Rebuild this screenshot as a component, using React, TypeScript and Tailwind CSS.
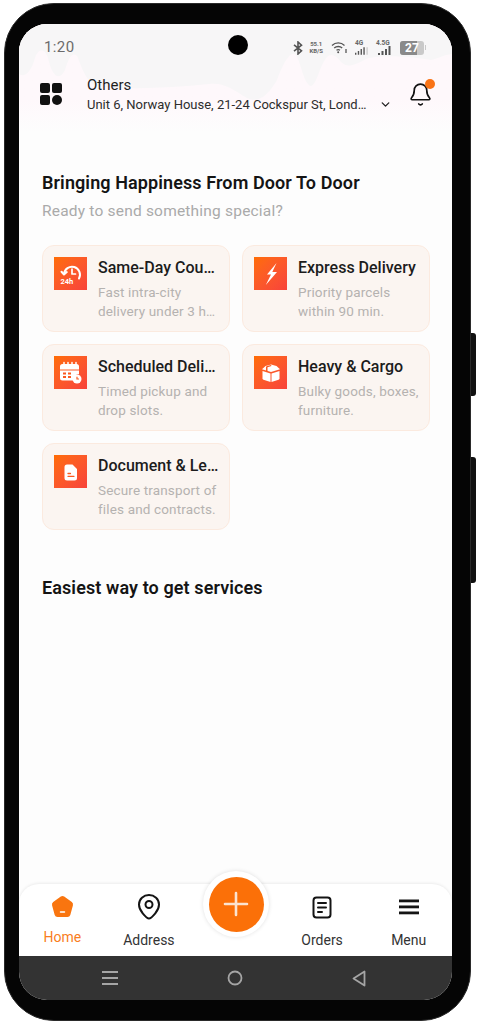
import { Bell, ChevronDown } from 'lucide-react'
import type { ReactNode } from 'react'

function SameDayIcon() {
  return (
    <svg width="24" height="24" viewBox="0 0 24 24" fill="none" stroke="white" strokeLinecap="round" strokeLinejoin="round">
      <path d="M5 12a8 8 0 1 1 15 4.500" strokeWidth="2" />
      <path d="M2.500 9.800l2.500 2.700 2.800-2.400" strokeWidth="2" />
      <path d="M13 7v5h3.500" strokeWidth="1.700" />
      <text x="1.500" y="22" fontSize="7.500" fontWeight="700" fill="white" stroke="none" fontFamily="Roboto, sans-serif">24h</text>
    </svg>
  )
}

function BoltIcon() {
  return (
    <svg width="24" height="24" viewBox="0 0 24 24" fill="white">
      <path d="M17.500 1 8 12.500h4L6.800 23 18 10h-4.700z" />
    </svg>
  )
}

function CalendarIcon() {
  return (
    <svg width="25" height="25" viewBox="0 0 25 25" fill="none">
      <path d="M2 6.500a2.500 2.500 0 0 1 2.500-2.500h14a2.500 2.500 0 0 1 2.500 2.500v3H2z" fill="white" />
      <path d="M2 10.500h19v3.500a6 6 0 0 0-5.500 6.500H4.500A2.500 2.500 0 0 1 2 18z" fill="white" />
      <path d="M6 2.500v3M10 2.500v3M14 2.500v3M18 2.500v3" stroke="white" strokeWidth="1.500" strokeLinecap="round" />
      <path d="M5 12.500h3v2H5zM10 12.500h3v2h-3zM5 16h3v2H5zM10 16h3v2h-3z" fill="#fb5a20" />
      <circle cx="19" cy="19" r="4.500" fill="white" />
      <path d="M19 16.800V19h2" stroke="#fb5a20" strokeWidth="1.200" fill="none" />
    </svg>
  )
}

function BoxIcon() {
  return (
    <svg width="24" height="24" viewBox="0 0 24 24" fill="white">
      <path d="M12 3.500 6.500 5 3 8.200 12 11l9-2.800L17.500 5z" />
      <path d="M3.500 10l8 2.400V21l-7-2.300a1.500 1.500 0 0 1-1-1.400z" />
      <path d="M20.500 10l-8 2.400V21l7-2.300a1.500 1.500 0 0 0 1-1.400z" />
      <path d="M8 5l4-1 .500 1-4 1.300V11l-1.500-.500V5.800z" fill="#fb5a20" />
    </svg>
  )
}

function DocIcon() {
  return (
    <svg width="24" height="24" viewBox="0 0 24 24" fill="none">
      <path d="M8 4.500h5.500l4.500 4.500v9a2.500 2.500 0 0 1-2.500 2.500h-7.500A2.500 2.500 0 0 1 5.500 18V7A2.500 2.500 0 0 1 8 4.500z" fill="white" />
      <path d="M9 13.500h2.500M9 16.300h6" stroke="#fb5a20" strokeWidth="1.300" strokeLinecap="round" />
    </svg>
  )
}

function ServiceCard({ icon, title, lines }: { icon: ReactNode; title: string; lines: string[] }) {
  return (
    <div className="flex h-[87px] min-w-0 gap-[11px] rounded-xl border border-[#fbeadf] bg-[#fbf5f1] pl-[11px] pr-[8px] pt-[11px]">
      <div className="flex h-[33px] w-[33px] shrink-0 items-center justify-center bg-linear-to-br from-[#ff6c00] to-[#f8423a]">
        {icon}
      </div>
      <div className="min-w-0 flex-1">
        <p className="truncate pr-[2px] text-[16px] leading-[22px] font-medium text-[#1c1c1c]">{title}</p>
        <div className="mt-[4px]">
          {lines.map((line) => (
            <p key={line} className="truncate pr-[2px] text-[13.5px] leading-[19px] tracking-[0.15px] text-[#b5b2b0]">
              {line}
            </p>
          ))}
        </div>
      </div>
    </div>
  )
}

function NavTab({ icon, label, active }: { icon: ReactNode; label: string; active?: boolean }) {
  return (
    <div className="flex flex-col items-center">
      <div className="flex h-[34px] items-center justify-center">{icon}</div>
      <span className={active ? 'mt-[4px] text-[14px] leading-[18px] text-[#f97d22]' : 'mt-[7px] text-[14px] leading-[18px] text-[#333333]'}>
        {label}
      </span>
    </div>
  )
}

export default function App() {
  return (
    <div className="relative h-[1024px] w-[477px] overflow-hidden bg-white font-['Roboto',sans-serif]">
      {/* side buttons */}
      <div className="absolute left-[468px] top-[333px] h-[63px] w-[8px] rounded-r-[3px] bg-[#111111]" />
      <div className="absolute left-[468px] top-[457px] h-[126px] w-[8px] rounded-r-[3px] bg-[#111111]" />

      <div className="absolute left-[4px] top-[3px] h-[1018px] w-[467px] rounded-[50px] border border-[#2a2a2a] bg-[#050505] pb-[20px] pl-[14px] pr-[18px] pt-[20px]">
        <div className="relative flex h-full flex-col overflow-hidden rounded-[28px] bg-[#fdfdfd]">
          {/* faint wave behind the header */}
          <div className="absolute left-0 top-0 h-[108px] w-full bg-linear-to-b from-[#fef8fb] from-70% to-[#fdfdfd]" />
          <svg className="absolute left-0 top-0" width="433" height="108" viewBox="0 0 433 108" fill="#f7f6f7">
            <path d="M0 0V50C6 54 12 48 16 34C19 24 26 24 29 34C33 52 40 58 46 46C50 32 54 28 58 32C62 40 66 58 78 62C110 66 150 64 190 60C205 58 215 66 228 74C240 80 250 70 258 56C264 40 270 28 276 30C282 36 284 60 292 62C298 60 300 44 306 36C310 28 316 30 322 38C330 46 340 38 350 34C370 30 400 34 412 36C420 34 428 30 433 30V0Z" />
          </svg>

          {/* status bar */}
          <div className="relative flex h-[46px] shrink-0 items-center pl-[25px] pr-[26px] pt-[1px] text-[#6b6b6b]">
            <span className="text-[15px] leading-none tracking-[0.4px]">1:20</span>
            <div className="absolute left-[209px] top-[11px] h-[20px] w-[20px] rounded-full bg-black" />
            <div className="ml-auto flex items-center gap-[6px]">
              <svg width="10" height="14" viewBox="0 0 10 14" fill="none" stroke="#555555" strokeWidth="1.600">
                <path d="M1 3.800l7.500 6L5 13V1l3.500 3.200L1 10.200" />
              </svg>
              <span className="text-center text-[6px] leading-[6.500px] font-bold text-[#666666]">
                55.1
                <br />
                KB/S
              </span>
              <svg className="ml-[2px]" width="16" height="13" viewBox="0 0 16 13" fill="none" stroke="#555555" strokeWidth="1.300">
                <path d="M1 4.500c3.500-3.500 9-3.500 12.500 0M3.200 7c2.300-2 5.800-2 8 0M5.500 9.300c1-.8 2.500-.8 3.500 0" />
                <circle cx="7.200" cy="11.300" r="1" fill="#555555" stroke="none" />
                <path d="M15 8v4" />
              </svg>
              <div className="relative ml-[2px] h-[14px] w-[13px]">
                <span className="absolute left-0 top-[-1px] text-[6.500px] font-bold leading-none text-[#666666]">4G</span>
                <svg className="absolute left-0 top-[5px]" width="13" height="9" viewBox="0 0 14 9" fill="#555555">
                  <path d="M0 7h1.500v2H0zM3 5h1.500v4H3zM6 3h1.500v6H6zM9 1h1.500v8H9z" />
                  <path d="M12.500 1h1v8h-1z" fill="#bbbbbb" />
                </svg>
              </div>
              <div className="relative ml-[2px] h-[14px] w-[16px]">
                <span className="absolute left-0 top-[-1px] text-[6.500px] font-bold leading-none text-[#666666]">4.5G</span>
                <svg className="absolute left-[2px] top-[5px]" width="14" height="9" viewBox="0 0 14 9" fill="#555555">
                  <path d="M0 7h2v2H0zM3.500 5h2v4h-2zM7 3h2v6H7zM10.500 0h2v9h-2z" />
                </svg>
              </div>
              <div className="ml-[2px] flex items-center gap-[1px]">
                <div className="relative flex h-[14px] w-[24px] items-center overflow-hidden rounded-[3px] bg-[#c9c9c9]">
                  <div className="h-full w-[17px] bg-[#8a8a8a]" />
                  <span className="absolute left-[5px] text-[12px] font-bold text-white">27</span>
                </div>
                <div className="h-[5px] w-[1px] bg-[#c9c9c9]" />
              </div>
            </div>
          </div>

          {/* header */}
          <div className="relative flex h-[48px] shrink-0 items-center pl-[21px] pr-[19px]">
            <div className="grid h-[22px] w-[22px] shrink-0 grid-cols-2 gap-[2px]">
              <div className="rounded-[2px] bg-[#111111]" />
              <div className="rounded-[2px] bg-[#111111]" />
              <div className="rounded-[2px] bg-[#111111]" />
              <div className="rounded-full bg-[#111111]" />
            </div>
            <div className="ml-[25px] w-[283px] min-w-0">
              <p className="text-[15px] leading-[20px] text-[#1f1f1f]">Others</p>
              <p className="mt-[1px] truncate text-[13px] leading-[18px] text-[#2d2d2d]">
                Unit 6, Norway House, 21-24 Cockspur St, London SW1Y 5BN
              </p>
            </div>
            <ChevronDown className="ml-[9px] mt-[21px] shrink-0 text-[#222222]" size={13} strokeWidth={2.500} />
            <div className="relative ml-auto">
              <Bell size={25} strokeWidth={1.600} className="text-[#111111]" />
              <div className="absolute right-[-2px] top-[-3px] h-[10px] w-[10px] rounded-full bg-[#f97316]" />
            </div>
          </div>

          {/* content */}
          <div className="relative flex-1 pl-[23px] pr-[22px] pt-[53px]">
            <h1 className="text-[18px] leading-[24px] font-semibold tracking-[0.1px] text-[#141414]">Bringing Happiness From Door To Door</h1>
            <p className="mt-[6px] text-[15.500px] leading-[20px] tracking-[0.2px] text-[#aaaaaa]">Ready to send something special?</p>

            <div className="mt-[24px] grid grid-cols-2 gap-x-[12px] gap-y-[12px]">
              <ServiceCard icon={<SameDayIcon />} title="Same-Day Courier" lines={['Fast intra-city', 'delivery under 3 hours.']} />
              <ServiceCard icon={<BoltIcon />} title="Express Delivery" lines={['Priority parcels', 'within 90 min.']} />
              <ServiceCard icon={<CalendarIcon />} title="Scheduled Delivery" lines={['Timed pickup and', 'drop slots.']} />
              <ServiceCard icon={<BoxIcon />} title="Heavy & Cargo" lines={['Bulky goods, boxes,', 'furniture.']} />
              <ServiceCard icon={<DocIcon />} title="Document & Legal" lines={['Secure transport of', 'files and contracts.']} />
            </div>

            <h2 className="mt-[46px] text-[18px] leading-[24px] font-semibold tracking-[0.1px] text-[#141414]">Easiest way to get services</h2>
          </div>

          {/* bottom nav */}
          <div className="relative grid h-[72px] shrink-0 grid-cols-5 rounded-t-[20px] bg-white pt-[6px] shadow-[0_-1px_3px_rgba(0,0,0,0.07)]">
            <NavTab
              active
              label="Home"
              icon={
                <svg width="25" height="25" viewBox="0 0 25 25">
                  <path d="M10.800 1.600a3 3 0 0 1 3.400 0l7.600 5.500a3 3 0 0 1 1.100 3.300l-2.600 9.500a3 3 0 0 1-2.900 2.100H7.600a3 3 0 0 1-2.900-2.100L2.100 10.400a3 3 0 0 1 1.100-3.300z" fill="#f9750f" />
                  <path d="M10.500 17h4" stroke="white" strokeWidth="1.500" strokeLinecap="round" />
                </svg>
              }
            />
            <NavTab
              label="Address"
              icon={
                <svg width="24" height="28" viewBox="0 0 24 28" fill="none" stroke="#141414" strokeWidth="2">
                  <path d="M12 2C6.500 2 2 6.200 2 11.500c0 3 1 5.500 3.500 8.500 2 2.400 4.500 5.500 6.500 5.500s4.500-3.100 6.500-5.500c2.500-3 3.500-5.500 3.500-8.500C22 6.200 17.500 2 12 2z" />
                  <circle cx="12" cy="11.500" r="3.500" />
                </svg>
              }
            />
            <div />
            <NavTab
              label="Orders"
              icon={
                <svg width="20" height="23" viewBox="0 0 20 23" fill="none" stroke="#141414" strokeWidth="2" strokeLinecap="round">
                  <rect x="1.500" y="1.500" width="17" height="20" rx="3" />
                  <path d="M6 7h8M6 11.500h8M6 16h4" />
                </svg>
              }
            />
            <NavTab
              label="Menu"
              icon={
                <svg width="20" height="16" viewBox="0 0 20 16" fill="#141414">
                  <rect y="0.500" width="20" height="2.800" />
                  <rect y="6.500" width="20" height="2.800" />
                  <rect y="12.500" width="20" height="2.800" />
                </svg>
              }
            />
            {/* add button sits over the nav edge */}
            <div className="absolute left-[184px] top-[-13px] flex h-[66px] w-[66px] items-center justify-center rounded-full bg-white shadow-[0_0_4px_rgba(0,0,0,0.12)]">
              <div className="flex h-[55px] w-[55px] items-center justify-center rounded-full bg-[#fb7008]">
                <svg width="26" height="26" viewBox="0 0 26 26" stroke="#fbe3d0" strokeWidth="2.600" strokeLinecap="round">
                  <path d="M13 2v22M2 13h22" />
                </svg>
              </div>
            </div>
          </div>

          {/* android nav */}
          <div className="flex h-[44px] shrink-0 items-center justify-center gap-[109px] bg-[#333333] pr-[3px]">
            <svg width="16" height="16" viewBox="0 0 16 16" fill="#a5a5a5">
              <rect y="1" width="16" height="2" />
              <rect y="7" width="16" height="2" />
              <rect y="13" width="16" height="2" />
            </svg>
            <svg width="16" height="16" viewBox="0 0 16 16" fill="none" stroke="#a5a5a5" strokeWidth="1.800">
              <circle cx="8" cy="8" r="6.500" />
            </svg>
            <svg width="14" height="17" viewBox="0 0 14 17" fill="none" stroke="#a5a5a5" strokeWidth="1.800" strokeLinejoin="round">
              <path d="M12.500 1.500v14L1.500 8.500z" />
            </svg>
          </div>
        </div>
      </div>
    </div>
  )
}
